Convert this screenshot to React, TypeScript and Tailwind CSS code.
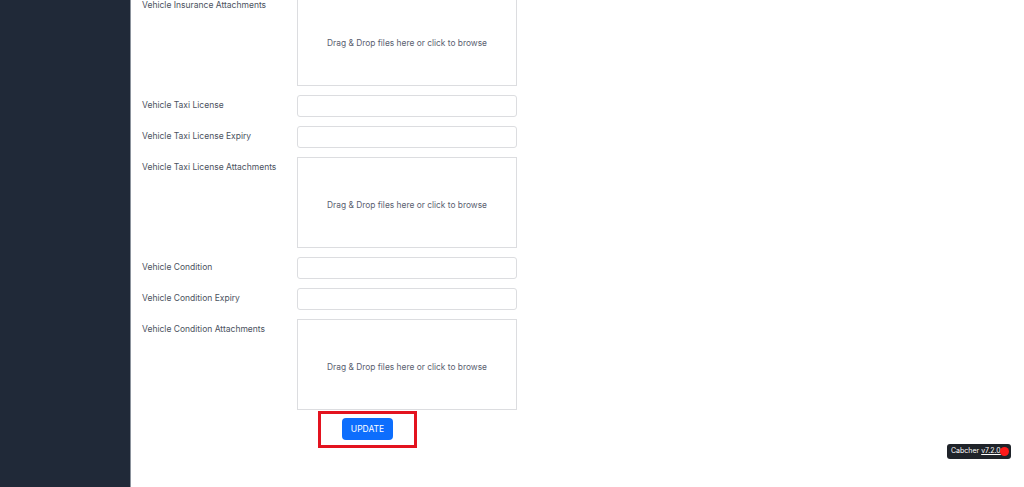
export default function App() {
  const rows = [
    { label: "Vehicle Insurance Attachments", type: "drop" },
    { label: "Vehicle Taxi License", type: "input" },
    { label: "Vehicle Taxi License Expiry", type: "input" },
    { label: "Vehicle Taxi License Attachments", type: "drop" },
    { label: "Vehicle Condition", type: "input" },
    { label: "Vehicle Condition Expiry", type: "input" },
    { label: "Vehicle Condition Attachments", type: "drop" },
  ];

  return (
    <div
      className="relative flex h-[487px] w-[1024px] overflow-hidden bg-white"
      style={{ fontFamily: "Inter, 'Liberation Sans', sans-serif" }}
    >
      {/* Sidebar */}
      <aside className="h-full w-[131px] shrink-0 border-r border-[#8b929c] bg-[#202938]" />

      {/* Form */}
      <main className="flex-1 pl-[11px]">
        <div className="-mt-[5px] flex flex-col gap-[9px]">
          {rows.map((row) => (
            <div key={row.label} className="flex">
              <label className="w-[155px] shrink-0 pt-[4px] text-[8.5px] leading-[12px] text-[#4b5260]">
                {row.label}
              </label>
              {row.type === "drop" ? (
                <div className="flex h-[91px] w-[220px] items-center justify-center border border-[#dcdde0] bg-white pt-[5px] text-[8.4px] text-[#5a6070]">
                  Drag &amp; Drop files here or click to browse
                </div>
              ) : (
                <input className="h-[22px] w-[220px] rounded-[3px] border border-[#dcdde0] bg-white" />
              )}
            </div>
          ))}
        </div>

        <div className="ml-[176px] mt-[1px] flex h-[37px] w-[99px] items-center justify-center border-[3px] border-[#e3131f] pb-[1px]">
          <button className="h-[22px] w-[51px] rounded-[4px] bg-[#0d6efd] text-[8.5px] text-white">
            UPDATE
          </button>
        </div>
      </main>

      {/* Version badge */}
      <div className="absolute left-[947px] top-[444px] flex h-[15px] items-center gap-[2px] rounded-[3px] bg-[#1f2329] pl-[4px] pr-[2px] text-[7px] text-white">
        <span>Cabcher</span>
        <span className="underline">v7.2.0</span>
        <span className="-ml-[3px] h-[9px] w-[9px] rounded-full bg-[#ff1a1a]" />
      </div>
    </div>
  );
}
